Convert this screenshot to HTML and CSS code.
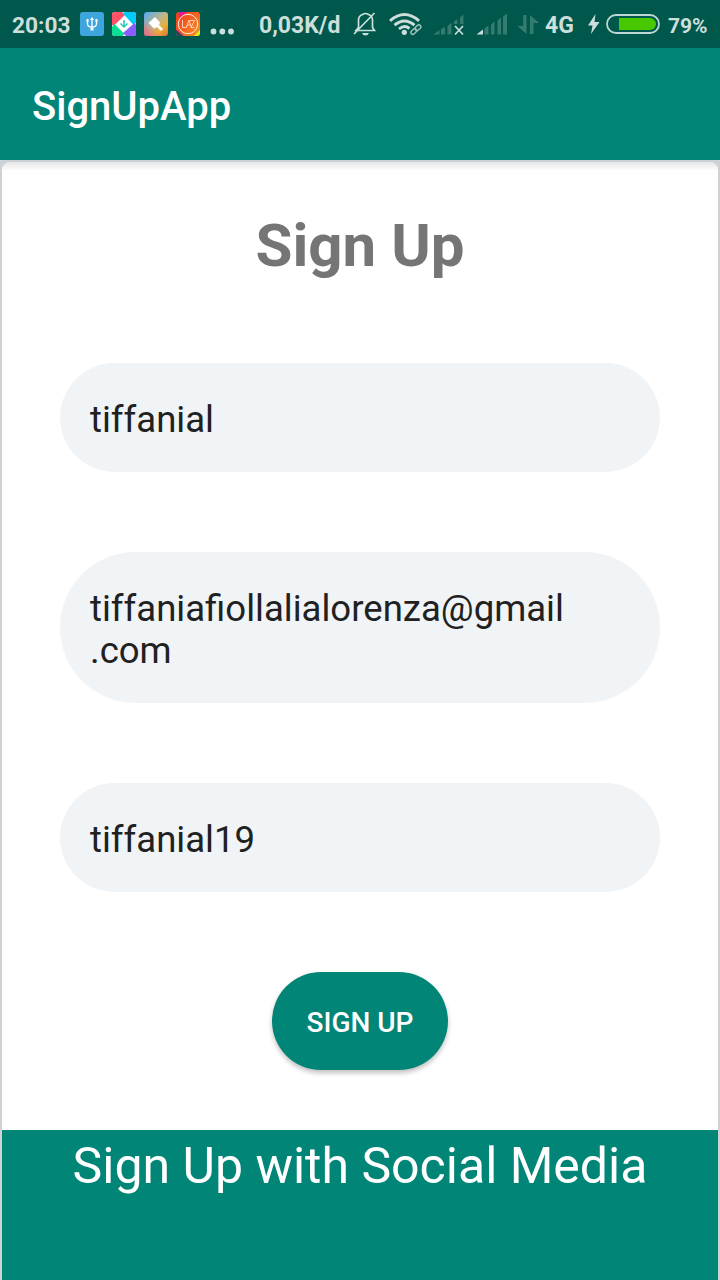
FILE: index.html
```html
<!DOCTYPE html>
<html lang="en">
<head>
<meta charset="utf-8">
<title>SignUpApp</title>
<link rel="stylesheet" href="styles.css">
</head>
<body>
<header class="status">
  <span class="status-text time">20:03</span>
  <div class="notifications">
    <svg class="app-icon" viewBox="0 0 24 24"><rect width="24" height="24" rx="3" fill="#3fa5df"/><path d="M12 7v11M7.500 8v4q0 3 4.500 3t4.500-3V8" fill="none" stroke="#fff" stroke-width="1.300"/><path d="M10 8l2-3 2 3zM6.500 7h2v3h-2zM15.500 7h2v3h-2zM10.500 16h3v2.500h-3z" fill="#fff"/></svg>
    <svg class="app-icon" viewBox="0 0 24 24"><defs><clipPath id="tile"><rect width="24" height="24" rx="3"/></clipPath></defs><g clip-path="url(#tile)"><path fill="#fff" d="M0 0h24v24H0z"/><path fill="#ff5267" d="M0 0h10l3 3L1.500 14 0 12.500z"/><path fill="#00ccfb" d="M12.500 0H24v11l-2.500 2L10.500 1z"/><path fill="#08df91" d="M0 14.500L2.500 12l10 10-2 2H0z"/><path fill="#8b5cff" d="M24 12.500V24H14l-3-3L22.500 11z"/></g><path d="M12 8v7M8.500 11.500L12 15l3.500-3.500" fill="none" stroke="#24c9b6" stroke-width="1.500"/></svg>
    <svg class="app-icon" viewBox="0 0 24 24"><defs><linearGradient id="brush" x1="0" y1="0" x2="1" y2="1"><stop stop-color="#4faaf5"/><stop offset=".48" stop-color="#c0b68a"/><stop offset=".72" stop-color="#e9ae38"/><stop offset="1" stop-color="#e36d35"/></linearGradient><linearGradient id="blush" x1="0" y1="1" x2=".35" y2=".6"><stop stop-color="#e85d85"/><stop offset="1" stop-color="#e85d85" stop-opacity="0"/></linearGradient></defs><rect width="24" height="24" rx="3" fill="url(#brush)"/><rect width="24" height="24" rx="3" fill="url(#blush)"/><path d="M4.500 11L11 5l5 5.500-1 2.500 4 4-2 2-4-4-3 1.500z" fill="#fff"/></svg>
    <svg class="app-icon" viewBox="0 0 24 24"><defs><linearGradient id="laz" x1="0" y1="0" x2="1" y2="1"><stop stop-color="#ef3b20"/><stop offset=".5" stop-color="#f4631d"/><stop offset="1" stop-color="#ff941d"/></linearGradient></defs><rect width="24" height="24" rx="3" fill="url(#laz)"/><path d="M3 0h8L3 6zM0 17l8 7H3q-3 0-3-3z" fill="#ed139a"/><path d="M0 18l7 6H3q-3 0-3-3z" fill="#204d50"/><path d="M24 18v3q0 3-3 3h-3z" fill="#d9ee24"/><circle cx="12" cy="12" r="9.700" fill="none" stroke="#fff" stroke-width=".9"/><path d="M6.500 8v7.500H10M10 16l3-8 2.500 8M11 13h4M14 8.500h4.500L15 15.500h3.500" fill="none" stroke="#ffd9c5" stroke-width=".9"/></svg>
  </div>
  <svg class="status-icon dots" width="26" viewBox="209 0 26 48"><circle cx="213.500" cy="31.500" r="2.900"/><circle cx="222.300" cy="31.500" r="2.900"/><circle cx="231" cy="31.500" r="2.900"/></svg>
  <span class="status-text rate">0,03K/d</span>
  <svg class="status-icon" width="26" viewBox="352 0 26 48"><path d="M356 30.500h18.500l-2-3V20q0-4-4-5.500-3-2-6 0-4 1.500-4 5.500v7.500zM354 34l20.500-21" fill="none" stroke="#ccdfdb" stroke-width="1.700"/><path d="M362 33h7q-1 2.500-3.500 2.500T362 33z"/></svg>
  <svg class="status-icon wifi" width="36" viewBox="388 0 36 48"><g fill="none" stroke="#ccdfdb" stroke-width="2.900"><path d="M390 20.800q14.500-12.500 29 0M394.500 25.200q10-8.400 20 0M399 29q5.500-4.500 10.500-.5"/></g><circle cx="404.300" cy="32.300" r="2.600"/><g fill="none" stroke="#00574b" stroke-width="4"><path d="M411 34l9-8"/></g><g fill="none" stroke="#9dc3bb" stroke-width="1.400"><rect x="410.500" y="29.500" width="6.500" height="4" rx="2" transform="rotate(-43 413.750 31.500)"/><rect x="414.700" y="25.700" width="6.500" height="4" rx="2" transform="rotate(-43 417.950 27.700)"/></g></svg>
  <svg class="status-icon signal" width="32" viewBox="433 0 32 48"><g fill="#347b70"><path d="M433.500 34.500l6-4.500v4.500zM441 29l4-2v7.500h-4zM447.500 26l4-3v11.500h-4zM454 21.500l3.500-2.500v5H454zM460 17.500l3.500-3V24H460z"/></g><path d="M455 26l8 8.500m0-8.500l-8 8.500" fill="none" stroke="#ccdfdb" stroke-width="1.700"/></svg>
  <svg class="status-icon signal-two" width="32" viewBox="476 0 32 48"><path d="M476.500 34.500l6.500-5v5z"/><path d="M484.500 28.500l4-3v9h-4zM491 24.500l3.500-3v13H491zM497.500 20.500l3.500-3v17h-3.500zM503 16.500l4-3v21h-4z" fill="#347b70"/></svg>
  <svg class="status-icon arrows" width="22" viewBox="517 0 22 48"><path d="M526.500 15v19L517.500 26h5.700V15zM530 15l9 8h-5.500v11H530z" fill="#347b70"/></svg>
  <span class="status-text network">4G</span>
  <svg class="status-icon bolt" width="14" viewBox="587 0 14 48"><path d="M595.500 14l-7.500 11.500h4.500L591 34l8.500-12h-5z"/></svg>
  <svg class="status-icon battery" width="56" viewBox="605 0 56 48"><rect x="607" y="15" width="52" height="18" rx="9" fill="none" stroke="#c0d8d3" stroke-width="1.800"/><path d="M619 18h31a6 6 0 010 12h-31z" fill="#48c800"/></svg>
  <span class="status-text percent">79%</span>
</header>
<div class="appbar"><h1 class="app-title">SignUpApp</h1></div>
<main class="stage">
  <section class="card">
    <h2 class="title">Sign Up</h2>
    <form class="form">
      <div class="field">tiffanial</div>
      <div class="field field-tall">tiffaniafiollalialorenza@gmail<br>.com</div>
      <div class="field">tiffanial19</div>
      <button class="submit" type="button">SIGN UP</button>
    </form>
    <footer class="social">Sign Up with Social Media</footer>
  </section>
</main>
</body>
</html>
```
FILE: styles.css
```css
* { box-sizing: border-box; }
body {
  margin: 0;
  width: 720px;
  height: 1280px;
  overflow: hidden;
  display: flex;
  flex-direction: column;
  font-family: Roboto, sans-serif;
  background: #cdd2d6;
}
.status {
  flex: none;
  height: 48px;
  display: flex;
  align-items: center;
  padding-left: 12px;
  background: #00574b;
}
.status-text {
  flex: none;
  padding-top: 4px;
  font-size: 23px;
  line-height: 28px;
  font-weight: 700;
  color: #ccdfdb;
  white-space: nowrap;
}
.time { width: 68px; font-size: 22.700px; }
.notifications { flex: none; display: flex; gap: 8px; }
.app-icon { display: block; width: 24px; height: 24px; }
.status-icon { flex: none; height: 48px; fill: #ccdfdb; }
.dots { margin-left: 9px; }
.rate { width: 93px; margin-left: 24px; }
.wifi { margin-left: 10px; }
.signal { margin-left: 9px; }
.signal-two { margin-left: 11px; }
.arrows { margin-left: 9px; }
.network { width: 42px; margin-left: 6px; }
.battery { margin-left: 4px; }
.percent { margin-left: 7px; font-size: 21px; font-weight: 700; }
.appbar {
  flex: none;
  height: 112px;
  display: flex;
  align-items: center;
  padding: 6px 32px 0;
  background: #008577;
}
.app-title { margin: 0; font-size: 40px; line-height: 48px; font-weight: 500; color: #fff; }
.stage { flex: 1; padding: 2px 2px 0; background: #cdd2d6; }
.card {
  height: 1118px;
  display: flex;
  flex-direction: column;
  padding-top: 49px;
  border-radius: 8px 8px 0 0;
  background: linear-gradient(#e6e6e6, #fff 9px);
}
.title {
  margin: 0;
  height: 70px;
  font-size: 60px;
  line-height: 70px;
  font-weight: 700;
  text-align: center;
  color: #757575;
}
.form { display: flex; flex-direction: column; align-items: center; gap: 80px; padding-top: 82px; }
.field {
  width: 600px;
  height: 109px;
  padding: 36px 30px 0;
  border-radius: 55px;
  font-size: 36.550px;
  line-height: 42px;
  color: #212121;
  background: #f0f4f7;
}
.field-tall { height: 151px; border-radius: 76px; }
.submit {
  width: 176px;
  height: 98px;
  padding: 3px 0 0;
  border: 0;
  border-radius: 49px;
  font: 500 28px/34px Roboto, sans-serif;
  color: #fff;
  background: #008577;
  box-shadow: 0 3px 5px rgba(0, 0, 0, .25);
}
.social {
  flex: 1;
  margin-top: 60px;
  padding-top: 7px;
  font-size: 50px;
  line-height: 59px;
  text-align: center;
  color: #fff;
  background: #008577;
}
```
